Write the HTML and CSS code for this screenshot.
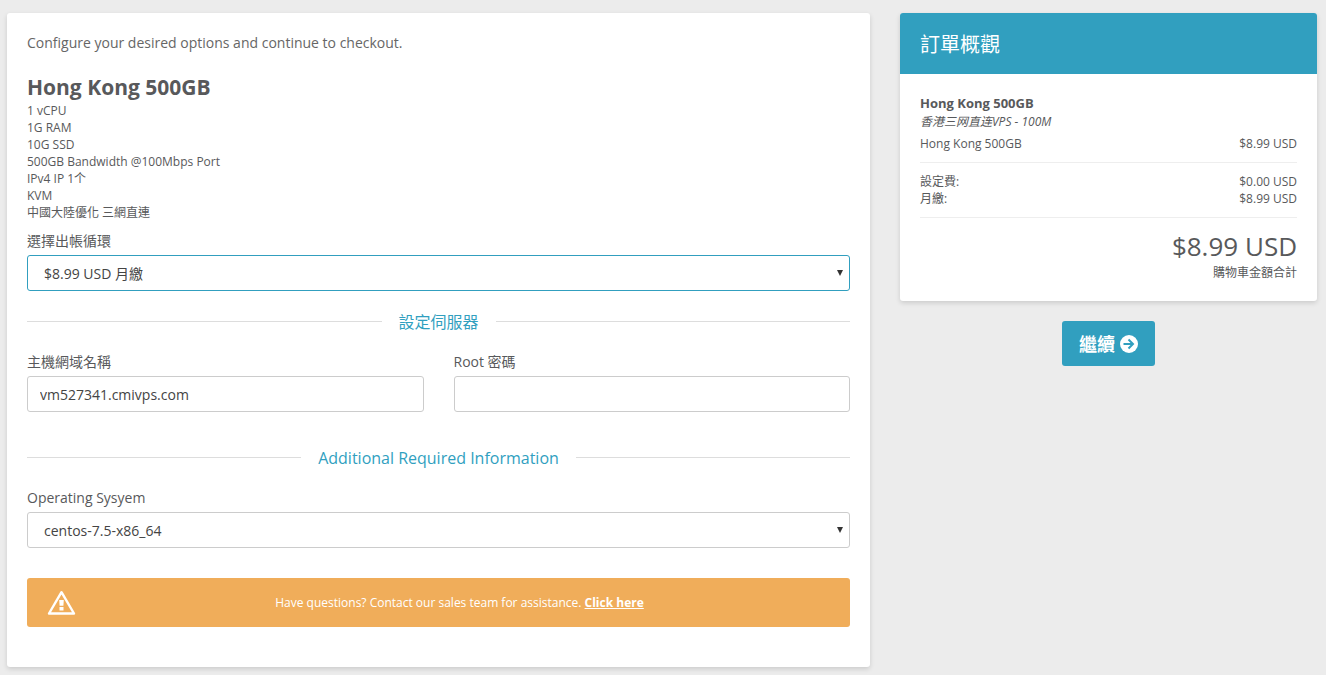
FILE: index.html
```html
<!DOCTYPE html>
<html lang="zh-Hant">
<head>
<meta charset="utf-8">
<meta name="viewport" content="width=device-width, initial-scale=1">
<title>Configure</title>
<link rel="stylesheet" href="styles.css">
</head>
<body>
<form class="page">
  <main class="card config">
    <p class="intro">Configure your desired options and continue to checkout.</p>
    <h1 class="product-name">Hong Kong 500GB</h1>
    <ul class="features">
      <li>1 vCPU</li>
      <li>1G RAM</li>
      <li>10G SSD</li>
      <li>500GB Bandwidth @100Mbps Port</li>
      <li>IPv4 IP 1个</li>
      <li>KVM</li>
      <li>中國大陸優化 三網直連</li>
    </ul>
    <div class="field">
      <label class="label" for="cycle">選擇出帳循環</label>
      <div class="select-wrap">
        <select class="control select active" id="cycle"><option>$8.99 USD 月繳</option></select>
        <svg class="arrow" viewBox="0 0 6 6" aria-hidden="true"><path d="M0 0h6L3 6z"/></svg>
      </div>
    </div>
    <h2 class="divider">設定伺服器</h2>
    <div class="columns">
      <div class="field">
        <label class="label" for="host">主機網域名稱</label>
        <input class="control" id="host" type="text" value="vm527341.cmivps.com">
      </div>
      <div class="field">
        <label class="label" for="rootpw">Root 密碼</label>
        <input class="control" id="rootpw" type="password">
      </div>
    </div>
    <h2 class="divider second">Additional Required Information</h2>
    <div class="field">
      <label class="label" for="os">Operating Sysyem</label>
      <div class="select-wrap">
        <select class="control select" id="os"><option>centos-7.5-x86_64</option></select>
        <svg class="arrow" viewBox="0 0 6 6" aria-hidden="true"><path d="M0 0h6L3 6z"/></svg>
      </div>
    </div>
    <div class="alert">
      <svg class="warning" viewBox="0 0 29 25" aria-hidden="true">
        <path d="M14.500 2.200 27 23.500H2z" fill="none" stroke="#fff" stroke-width="2.400" stroke-linejoin="round"/>
        <path d="M12.200 10h4.600l-.4 5.800h-3.800zM12.500 17h4v3.600h-4z" fill="#fff"/>
      </svg>
      <p class="alert-text">Have questions? Contact our sales team for assistance. <a class="alert-link" href="#">Click here</a></p>
    </div>
  </main>
  <aside class="sidebar">
    <section class="card summary">
      <h2 class="summary-title">訂單概觀</h2>
      <div class="summary-body">
        <h3 class="item-name">Hong Kong 500GB</h3>
        <p class="item-group">香港三网直连VPS - 100M</p>
        <div class="row"><span>Hong Kong 500GB</span><span>$8.99 USD</span></div>
        <div class="fees">
          <div class="row"><span>設定費:</span><span>$0.00 USD</span></div>
          <div class="row"><span>月繳:</span><span>$8.99 USD</span></div>
        </div>
        <div class="amount">$8.99 USD</div>
        <div class="amount-note">購物車金額合計</div>
      </div>
    </section>
    <button class="continue" type="button">繼續
      <svg class="go" viewBox="0 0 18 18" aria-hidden="true">
        <circle cx="9" cy="9" r="9" fill="#fff"/>
        <path d="M3.500 9h9.500M8.500 4.500 13 9 8.500 13.500" fill="none" stroke="#319fbf" stroke-width="2"/>
      </svg>
    </button>
  </aside>
</form>
</body>
</html>
```
FILE: styles.css
```css
* { box-sizing: border-box; }
body {
  margin: 0;
  background: #ececec;
  color: #58595b;
  font: 14px/20px "Open Sans", "Noto Sans CJK TC", sans-serif;
}
h1, h2, h3, p, ul { margin: 0; padding: 0; }

.page {
  display: grid;
  grid-template-columns: 863fr 417fr;
  align-items: start;
  gap: 30px;
  padding: 13px 9px 8px 7px;
}
.card {
  background: #fff;
  border-radius: 3px;
  box-shadow: 0 2px 5px rgba(0, 0, 0, .14);
}
.config { padding: 20px 20px 40px; }

.intro { color: #666; margin-bottom: 20px; }
.product-name { font-size: 21px; font-weight: 700; line-height: 29px; }
.features {
  list-style: none;
  font-size: 12px;
  line-height: 17px;
  margin-bottom: 10px;
}
.label { display: block; line-height: 20px; margin-bottom: 4px; }
.control {
  display: block;
  width: 100%;
  height: 36px;
  padding: 0 12px;
  border: 1px solid #ccc;
  border-radius: 3px;
  background: #fff;
  color: #444;
  font: inherit;
  outline: 0;
}
.select { appearance: none; padding: 2px 16px 0; }
.active { border-color: #319fbf; }
.select-wrap { position: relative; }
.arrow {
  position: absolute;
  top: 15px;
  right: 7px;
  width: 6px;
  height: 6px;
  fill: #333;
  pointer-events: none;
}
.divider {
  display: flex;
  align-items: center;
  gap: 17px;
  margin: 21px 0 19px;
  color: #319fbf;
  font-size: 16px;
  font-weight: 400;
  line-height: 21px;
}
.divider::before, .divider::after {
  content: "";
  flex: 1;
  height: 1px;
  margin-bottom: 2px;
  background: #ddd;
}
.second { margin-top: 36px; }
.columns { display: grid; grid-template-columns: 1fr 1fr; gap: 30px; }

.alert {
  display: flex;
  align-items: center;
  gap: 13px;
  margin-top: 30px;
  padding: 12px 20px;
  border-radius: 3px;
  background: #f0ad5a;
  color: #fff;
}
.warning { width: 29px; height: 25px; }
.alert-text {
  flex: 1;
  text-align: center;
  font-size: 12px;
  line-height: 17px;
}
.alert-link { color: #fff; font-weight: 700; }

.summary-title {
  padding: 19px 20px 17px;
  border-radius: 3px 3px 0 0;
  background: #319fbf;
  color: #fff;
  font-size: 20px;
  font-weight: 400;
  line-height: 25px;
}
.summary-body { padding: 20px; font-size: 12px; line-height: 17px; }
.item-name { font-size: 13px; line-height: 19px; }
.item-group { font-style: italic; margin-bottom: 5px; }
.row { display: flex; justify-content: space-between; }
.fees {
  margin: 10px 0;
  padding: 10px 0;
  border-top: 1px solid #eee;
  border-bottom: 1px solid #eee;
}
.amount { font-size: 26px; line-height: 36px; text-align: right; }
.amount-note { text-align: right; }

.sidebar { display: flex; flex-direction: column; align-items: center; gap: 20px; }
.summary { width: 100%; }
.continue {
  display: flex;
  align-items: center;
  gap: 5px;
  height: 45px;
  padding: 0 17px;
  border: 0;
  border-radius: 3px;
  background: #319fbf;
  color: #fff;
  font: inherit;
  font-size: 18px;
  font-weight: 700;
}
.go { width: 18px; height: 18px; }
```
